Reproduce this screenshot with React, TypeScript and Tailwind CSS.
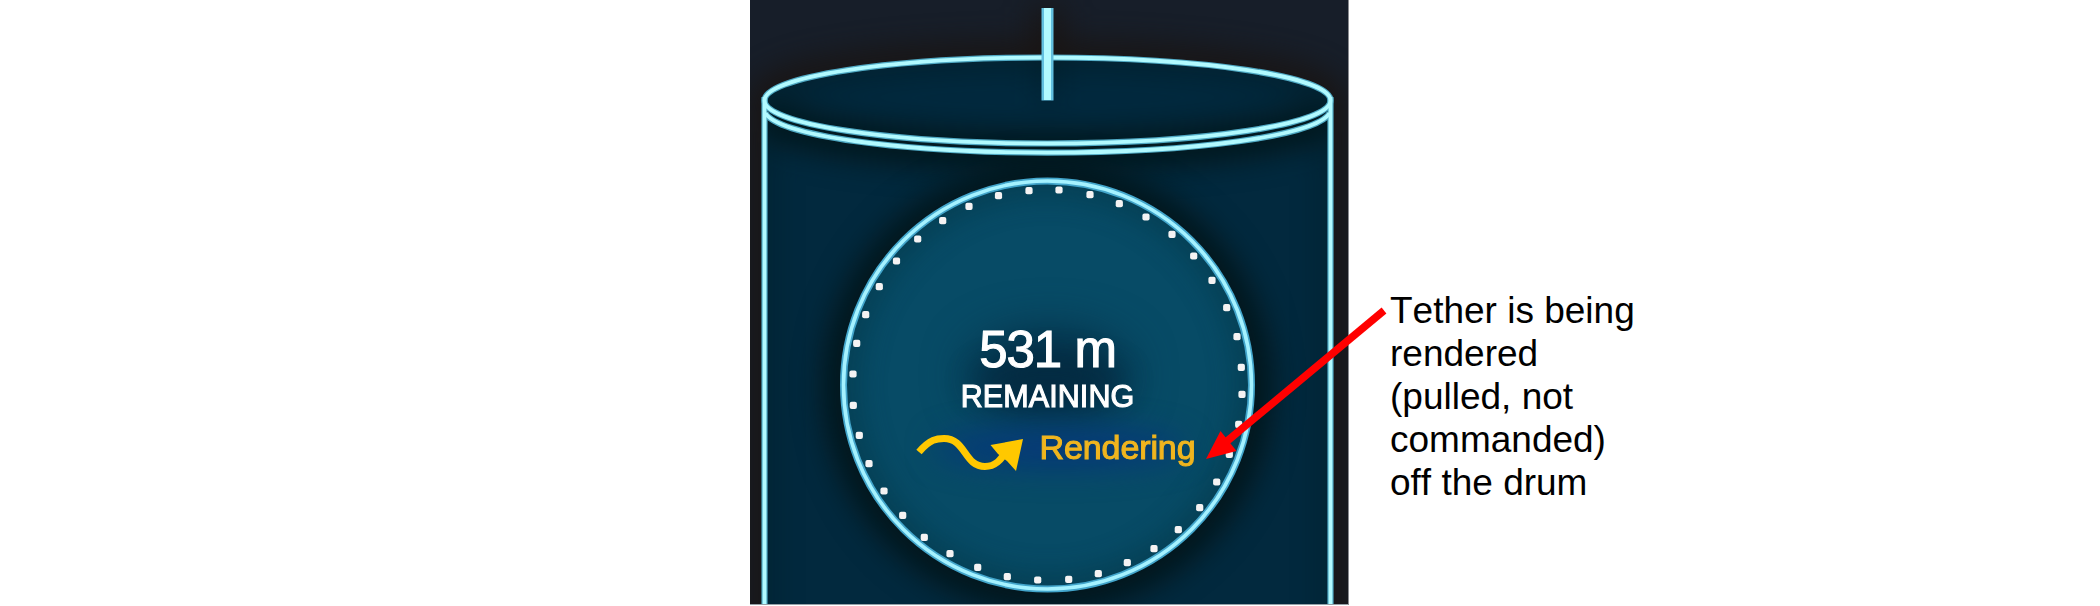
const dots: [number, number][] = [
  [1029, 190.7], [1059, 190], [998.5, 195.7], [969, 206.3], [942.7, 220.7], [917.7, 239], [896.5, 261],
  [879.3, 286.7], [865.7, 314.7], [856.7, 343.3], [853, 374], [1090, 194.7], [1119.3, 203.7], [1146, 217],
  [1172, 234.3], [1193.7, 256], [1212, 280.3], [1226.7, 307.7], [1237, 336.7], [1241.3, 367.3],
  [853.3, 405.3], [859.3, 435.3], [869, 463.7], [884, 491], [902.7, 515.3], [924.3, 537.3], [950, 553.7],
  [977.7, 567.3], [1007.3, 576.7], [1037.7, 580], [1242, 394.3], [1238.7, 424.3], [1229.3, 454.3],
  [1216.7, 482], [1199.7, 507.7], [1178.3, 529.7], [1154, 548.7], [1127.3, 562.7], [1098.3, 573.7],
  [1068.7, 579.3],
];

const body = "M764.5 100.5 A283 43 0 0 1 1330.5 100.5 V620 H764.5 Z";

function Outline() {
  return (
    <>
      <ellipse cx="1047.5" cy="100.5" rx="283" ry="43" />
      <path d="M765.5 113.2 A283 43 0 0 0 1329.5 113.2" />
      <path d="M764.5 97 V606 M1330.5 97 V606" />
    </>
  );
}

function Drum() {
  return (
    <svg className="block h-[606px] w-[599px]" viewBox="750 0 599 606">
      <defs>
        <filter id="soft" filterUnits="userSpaceOnUse" x="650" y="-100" width="800" height="820" colorInterpolationFilters="sRGB">
          <feGaussianBlur stdDeviation="15" />
        </filter>
        <filter id="wide" filterUnits="userSpaceOnUse" x="650" y="-100" width="800" height="820" colorInterpolationFilters="sRGB">
          <feGaussianBlur stdDeviation="24" />
        </filter>
        <clipPath id="panel"><rect x="750" y="0" width="599" height="605" /></clipPath>
        <clipPath id="body"><path d={body} /></clipPath>
        <clipPath id="dial"><circle cx="1047.5" cy="385" r="204" /></clipPath>
      </defs>
      <g clipPath="url(#panel)">
        <rect x="750" y="0" width="599" height="606" fill="#171e29" />
        <g fill="none" stroke="#191412" strokeWidth="30" filter="url(#soft)" opacity=".95">
          <ellipse cx="1047.5" cy="100.5" rx="283" ry="43" />
          <path d="M764.5 98 V680 M1330.5 98 V680 M1047.5 8 V100" />
        </g>
        <path d={body} fill="#02293e" />
        <g clipPath="url(#body)">
          <g fill="none" stroke="#021519" strokeWidth="20" filter="url(#soft)">
            <path d="M764.5 108 A283 43 0 0 0 1330.5 108" strokeWidth="34" />
            <path d="M764.5 100 A283 43 0 0 1 1330.5 100" strokeWidth="12" opacity=".8" />
            <path d="M1047.5 20 V100" strokeWidth="16" opacity=".5" />
            <path d="M764.5 110 V680 M1330.5 110 V680" strokeWidth="14" opacity=".5" />
          </g>
          <circle cx="1047.5" cy="387" r="204" fill="none" stroke="#02151a" strokeWidth="40" filter="url(#soft)" />
        </g>
        <circle cx="1047.5" cy="385" r="204" fill="#074b66" />
        <g clipPath="url(#dial)">
          <circle cx="1047.5" cy="385" r="206" fill="none" stroke="#05394a" strokeWidth="26" filter="url(#soft)" opacity=".8" />
          <ellipse cx="1049" cy="375" rx="78" ry="42" fill="#042b42" filter="url(#wide)" />
          <ellipse cx="1049" cy="382" rx="76" ry="22" fill="#042b42" filter="url(#soft)" opacity=".75" />
          <ellipse cx="1060" cy="448" rx="125" ry="20" fill="#063a78" filter="url(#soft)" />
        </g>
        <g fill="none" stroke="#4fa9c4" strokeWidth="6.2"><Outline /></g>
        <g fill="none" stroke="#b2faff" strokeWidth="3.8"><Outline /></g>
        <path d="M1047.5 8 V100.5" stroke="#62bfdf" strokeWidth="12" />
        <path d="M1047.5 8 V100" stroke="#b2faff" strokeWidth="7" />
        <circle cx="1047.5" cy="385" r="204" fill="none" stroke="#42a5cb" strokeWidth="7" />
        <circle cx="1047.5" cy="385" r="204" fill="none" stroke="#a5f2ff" strokeWidth="3.6" />
        {dots.map(([x, y]) => (
          <rect key={`${x}-${y}`} x={x - 3.6} y={y - 3.6} width="7.2" height="7.2" rx="2" fill="#f5f3f3" />
        ))}
        <path d="M919 452 C930 439 937 438.5 944 438.5 C966 438.5 964 466.5 985 466.5 C996 466.5 1001 459 1006 452" fill="none" stroke="#ffc800" strokeWidth="7" />
        <path d="M990.5 445 L1023 439 L1016 471 L1007 461 L998 454 Z" fill="#ffc800" />
      </g>
      <path d="M750 604.5 H1349" stroke="#96a0a8" strokeWidth="1" />
      <path d="M1348.5 0 V605" stroke="#8a8b90" strokeWidth="1" />
    </svg>
  );
}

export default function App() {
  return (
    <main className="relative flex h-[606px] w-[2100px] overflow-hidden bg-white pl-[750px] font-['Liberation_Sans',Arial,sans-serif]">
      <section className="relative h-[606px] w-[599px] shrink-0">
        <Drum />
        <div className="absolute inset-x-0 top-[323px] flex flex-col items-center whitespace-nowrap text-white">
          <div className="h-[56px] pr-[4px] text-[51px] leading-[53px] tracking-[-1px] [-webkit-text-stroke:1.1px_white]">531 m</div>
          <div className="h-[49px] pr-[4px] text-[30.5px] leading-[35px] tracking-[0.1px] [-webkit-text-stroke:1.1px_white]">REMAINING</div>
          <div className="self-start pl-[289.5px] text-[34px] leading-[38px] tracking-[-0.1px] text-[#f0b51e] [-webkit-text-stroke:1.1px_#f0b51e]">Rendering</div>
        </div>
      </section>
      <p className="ml-[41px] mt-[289px] w-[260px] text-[37px] leading-[43px] text-black [font-kerning:none]">
        Tether is being<br />rendered<br />(pulled, not<br />commanded)<br />off the drum
      </p>
      <svg className="absolute left-[1200px] top-[300px] h-[170px] w-[200px]" viewBox="1200 300 200 170">
        <path d="M1384 310.5 L1226 442" stroke="#ff0000" strokeWidth="7.5" />
        <path d="M1206 459 L1220.5 431 L1236.5 451 Z" fill="#ff0000" />
      </svg>
    </main>
  );
}
